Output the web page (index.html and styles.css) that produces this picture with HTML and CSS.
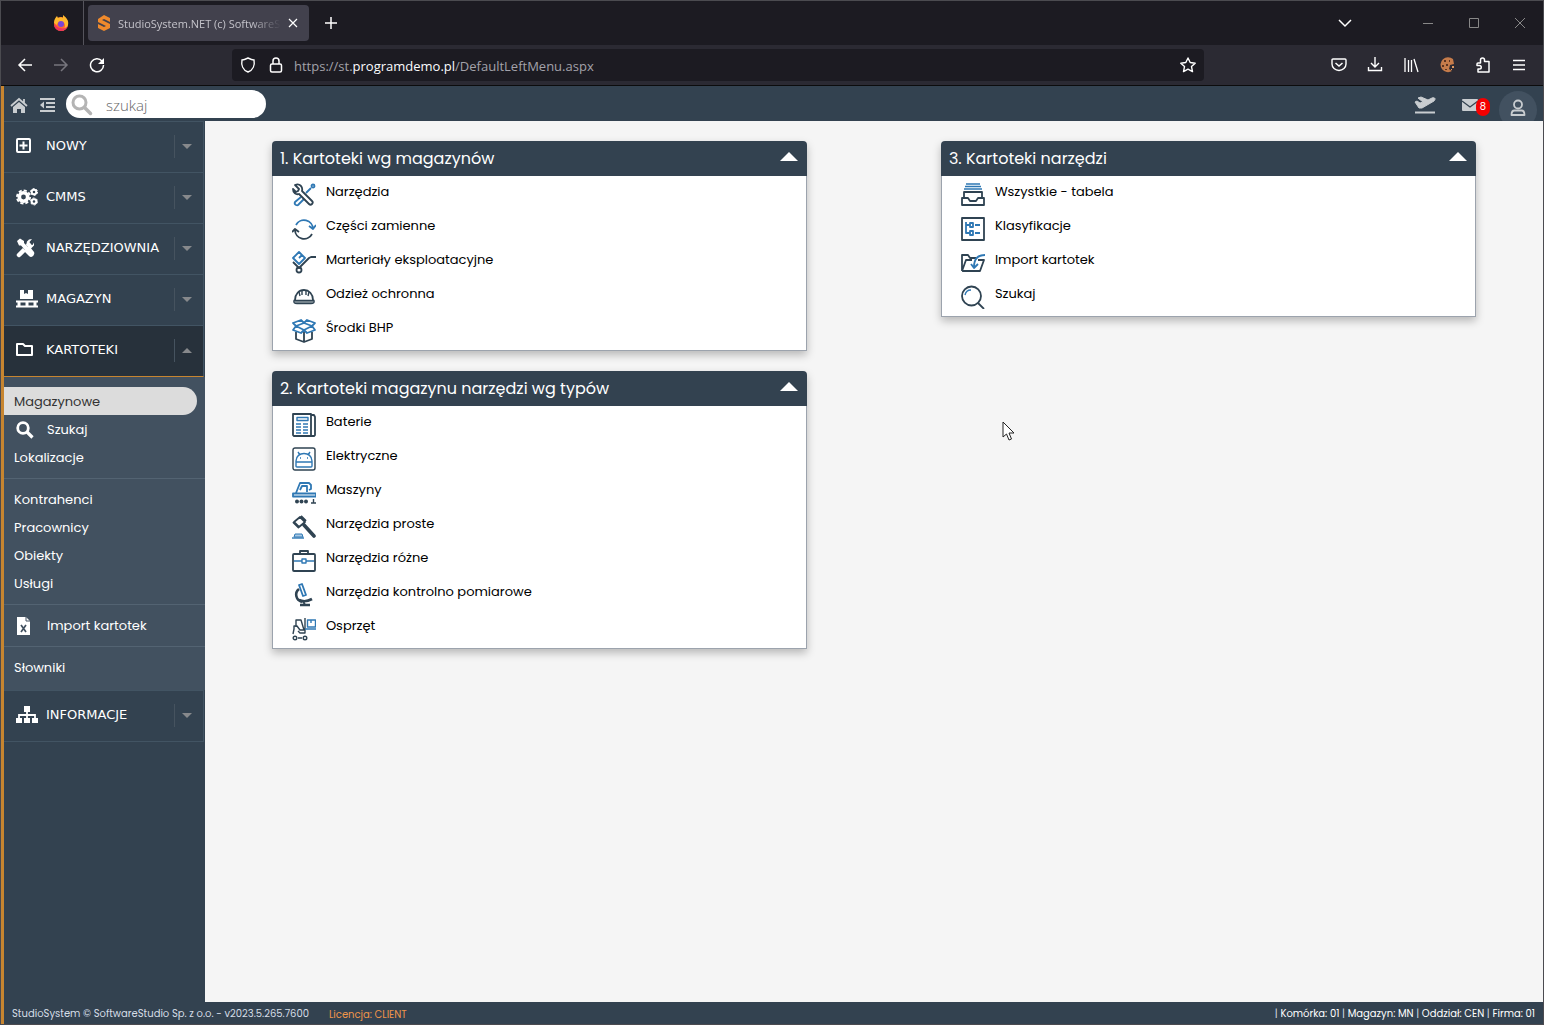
FILE: index.html
```html
<!DOCTYPE html>
<html lang="pl">
  <head>
    <meta charset="UTF-8" />
    <meta name="viewport" content="width=device-width, initial-scale=1.0" />
    <title>StudioSystem.NET (c) SoftwareStudio</title>
    <link rel="stylesheet" href="styles.css">
  </head>
  <body>
    <!-- browser -->
    <div class="tabs">
      <div class="pinned">
        <svg width="18" height="18" viewBox="0 0 18 18"><circle cx="9" cy="10" r="7" fill="#ff6a2b"/><path d="M2 9C2 5 4 3 5 2l1 2c2-1 4-1 5 0L11 1c4 3 6 6 5 10-1 3-3 5-6 6 4-3 4-7 1-9-3-1-6 0-6 3-1-1-2-1-3-2z" fill="#ffb92e"/><path d="M2 10c0 4 3 7 7 7 3 0 6-2 7-5-2 2-5 3-7 2-3 0-5-2-7-4z" fill="#f0355c"/><circle cx="9" cy="10" r="3" fill="#7a45d8"/></svg>
      </div>
      <div class="tab">
        <svg width="14" height="18" viewBox="0 0 14 18"><path d="M1 5l6-4 6 3v4l-2-1-4-2-2 1 8 4v4l-6 3-6-3v-4l6 3 2-1-8-4z" fill="#f08a2c"/></svg>
        <span class="tab_title">StudioSystem.NET (c) SoftwareS</span>
        <button class="tab_close" aria-label="Zamknij kartę"><svg width="10" height="10" viewBox="0 0 10 10"><path d="M1 1l8 8M9 1l-8 8" stroke="#fff" stroke-width="1.2"/></svg></button>
      </div>
      <button class="tab_new" aria-label="Nowa karta"><svg width="14" height="14" viewBox="0 0 14 14"><path d="M7 1v12M1 7h12" stroke="#fff" stroke-width="1.5"/></svg></button>
      <div class="window_btns">
        <button aria-label="Lista kart"><svg width="14" height="14" viewBox="0 0 14 14"><path d="M1 4l6 6 6-6" fill="none" stroke="#fff" stroke-width="1.5"/></svg></button>
        <button aria-label="Minimalizuj"><svg width="10" height="10" viewBox="0 0 10 10"><path d="M0 5.5h10" stroke="#888"/></svg></button>
        <button aria-label="Maksymalizuj"><svg width="10" height="10" viewBox="0 0 10 10"><path d="M.5.5h9v9h-9z" fill="none" stroke="#888"/></svg></button>
        <button aria-label="Zamknij"><svg width="10" height="10" viewBox="0 0 10 10"><path d="M0 0l10 10M10 0L0 10" stroke="#888"/></svg></button>
      </div>
    </div>
    <div class="toolbar">
      <div class="nav_btns">
        <button aria-label="Wstecz"><svg width="16" height="16" viewBox="0 0 16 16"><path d="M15 8H2M8 2L2 8l6 6" fill="none" stroke="#fff" stroke-width="1.5"/></svg></button>
        <button aria-label="Dalej"><svg width="16" height="16" viewBox="0 0 16 16"><path d="M1 8h13M8 2l6 6-6 6" fill="none" stroke="#77767e" stroke-width="1.5"/></svg></button>
        <button aria-label="Odśwież"><svg width="16" height="16" viewBox="0 0 16 16"><path d="M13 4a6.5 6.5 0 1 0 1.5 4" fill="none" stroke="#fff" stroke-width="1.5"/><path d="M15 1v6H9z" fill="#fff"/></svg></button>
      </div>
      <div class="url">
        <svg width="16" height="16" viewBox="0 0 16 16"><path d="M8 1c2 1 4 2 6 2 1 5-1 10-6 12C3 13 1 8 2 3c2 0 4-1 6-2z" fill="none" stroke="#fff" stroke-width="1.4"/></svg>
        <svg width="16" height="16" viewBox="0 0 16 16"><rect x="2.5" y="7" width="11" height="8" rx="1.5" fill="none" stroke="#fff" stroke-width="1.5"/><path d="M5 7V4a3 3 0 0 1 6 0v3" fill="none" stroke="#fff" stroke-width="1.5"/></svg>
        <span class="url_text">https://st.<b>programdemo.pl</b>/DefaultLeftMenu.aspx</span>
        <button class="star" aria-label="Dodaj zakładkę"><svg width="16" height="16" viewBox="0 0 16 16"><path d="M8 1l2.2 4.5 5 .7-3.7 3.4 1 5L8 12.2 3.5 14.6l1-5L.8 6.2l5-.7z" fill="none" stroke="#fff" stroke-width="1.4" stroke-linejoin="round"/></svg></button>
      </div>
      <div class="tools">
        <button aria-label="Pocket"><svg width="16" height="16" viewBox="0 0 16 16"><path d="M2 2h12q1 0 1 1v4a7 6.5 0 0 1-14 0V3q0-1 1-1z" fill="none" stroke="#fff" stroke-width="1.4"/><path d="M4.5 6L8 9l3.5-3" fill="none" stroke="#fff" stroke-width="1.5"/></svg></button>
        <button aria-label="Pobrane"><svg width="16" height="16" viewBox="0 0 16 16"><path d="M8 0v10M4 6l4 4 4-4M1.500 10v3.500h13V10" fill="none" stroke="#fff" stroke-width="1.4"/></svg></button>
        <button aria-label="Biblioteka"><svg width="16" height="16" viewBox="0 0 16 16"><path d="M2 1v14M5.5 3v12M8.5 3v12M11 2l4 13" fill="none" stroke="#fff" stroke-width="1.3"/></svg></button>
        <button aria-label="Ciasteczka"><svg width="16" height="16" viewBox="0 0 16 16"><path d="M14 2A7.5 7.5 0 1 0 13 14l-3-2 1-4 4-1z" fill="#c57b4a"/><path d="M13 9h2v2h-2zM12 12h1v1h-1z" fill="#e09a63"/><path d="M5 3h2v2H5zM3 8h2v2H3zM7 7h2v2H7zM6 12h2v1H6zM10 3h1v2h-1z" fill="#5c3421"/></svg></button>
        <button aria-label="Rozszerzenia"><svg width="16" height="16" viewBox="0 0 16 16"><path d="M5.5 4.5V3a2 2 0 0 1 4 0v1.5H14V15H3v-3h1.5a1.5 1.5 0 0 0 0-3.5H2V7q0-1 1-1h2.5z" fill="none" stroke="#fff" stroke-width="1.5" stroke-linejoin="round"/></svg></button>
        <button aria-label="Menu"><svg width="16" height="16" viewBox="0 0 16 16"><path d="M2 3.5h12M2 8h12M2 12.5h12" stroke="#fff" stroke-width="1.4"/></svg></button>
      </div>
    </div>

    <!-- application -->
    <div class="app">
      <header class="topbar">
        <a href="#" class="home" aria-label="Start"><svg width="18" height="16" viewBox="0 0 18 16"><path d="M9 5l6 5v6h-4v-4H7v4H3v-6z" fill="#c9cdd0"/><path d="M1 9l8-7 8 7M14 2v4" fill="none" stroke="#c9cdd0" stroke-width="1.8"/></svg></a>
        <button class="fold" aria-label="Zwiń menu"><svg width="15" height="14" viewBox="0 0 15 14"><path d="M0 1h15M6 5h9M6 9h9M0 13h15" stroke="#c9cdd0" stroke-width="2"/><path d="M4 3.5v7L0 7z" fill="#c9cdd0"/></svg></button>
        <label class="search">
          <svg width="22" height="22" viewBox="0 0 22 22"><circle cx="8.5" cy="8.5" r="6.5" fill="none" stroke="#b4b4b4" stroke-width="3"/><path d="M13.5 13.5l6 6" stroke="#b4b4b4" stroke-width="3.5" stroke-linecap="round"/></svg>
          <input type="text" placeholder="szukaj" aria-label="szukaj">
        </label>
        <div class="top_right">
          <a href="#" aria-label="Delegacje"><svg width="22" height="18" viewBox="0 0 22 18"><path d="M1 16.5h20" stroke="#c9cdd0" stroke-width="2"/><path d="M1 6l2-1 3 2 3-1-5-4 3-1 7 3 4-2c3-1 4 1 2 3L8 12H5z" fill="#c9cdd0" stroke="#c9cdd0" stroke-width="1"/></svg></a>
          <a href="#" class="mail" aria-label="Wiadomości"><svg width="16" height="12" viewBox="0 0 16 12"><rect width="16" height="12" rx="1" fill="#c9cdd0"/><path d="M0 2l8 6 8-6" fill="none" stroke="#33424f" stroke-width="1.2"/></svg><span class="badge">8</span></a>
          <button class="user" aria-label="Konto"><svg width="16" height="18" viewBox="0 0 16 18"><circle cx="8" cy="5.5" r="4" fill="none" stroke="#c9cdd0" stroke-width="1.8"/><path d="M4.5 11.5h7q3 0 3 4.5h-13q0-4.5 3-4.5z" fill="none" stroke="#c9cdd0" stroke-width="1.8" stroke-linejoin="round"/></svg></button>
        </div>
      </header>

      <div class="middle">
        <nav class="sidebar">
          <button class="menu_item"><svg width="22" height="22" viewBox="0 0 22 22"><rect x="1" y="4" width="13" height="13" rx="1" fill="none" stroke="#fff" stroke-width="2"/><path d="M7.5 6.5v8M3.5 10.5h8" stroke="#fff" stroke-width="2"/></svg><span>NOWY</span><i class="arrow"></i></button>
          <button class="menu_item"><svg width="22" height="22" viewBox="0 0 22 22"><circle cx="7.5" cy="11" r="4.2" fill="none" stroke="#fff" stroke-width="3.6"/><circle cx="7.5" cy="11" r="6.6" fill="none" stroke="#fff" stroke-width="1.8" stroke-dasharray="3.2 1.98"/><circle cx="18" cy="6" r="2.3" fill="none" stroke="#fff" stroke-width="2"/><circle cx="18" cy="6" r="3.5" fill="none" stroke="#fff" stroke-dasharray="2 1.66"/><circle cx="18" cy="15.5" r="2.3" fill="none" stroke="#fff" stroke-width="2"/><circle cx="18" cy="15.5" r="3.5" fill="none" stroke="#fff" stroke-dasharray="2 1.66"/></svg><span>CMMS</span><i class="arrow"></i></button>
          <button class="menu_item"><svg width="22" height="22" viewBox="0 0 22 22"><path d="M3 18L13 8" stroke="#fff" stroke-width="4.5" stroke-linecap="round"/><path d="M13 2.5l3-.5-2.5 3 .5 2.5 2.5.5L18 5.5v3l-3 3h-3l-2-3 1-4z" fill="#fff"/><path d="M4 5l8 8" stroke="#334250" stroke-width="4"/><path d="M1 4l3-2.5L8 4v2l4 4 2 0 4 5q1 2-1 4t-4 0l-4-4v-2L5 8.5H3z" fill="#fff"/></svg><span>NARZĘDZIOWNIA</span><i class="arrow"></i></button>
          <button class="menu_item"><svg width="22" height="22" viewBox="0 0 22 22"><path d="M4 2h4v4l2-1 2 1V2h5v9H4z" fill="#fff"/><path d="M0 13.5h22M0 18.5h22" stroke="#fff" stroke-width="2"/><path d="M3 13v6M11 13v6M19 13v6" stroke="#fff" stroke-width="3"/></svg><span>MAGAZYN</span><i class="arrow"></i></button>
          <button class="menu_item open"><svg width="22" height="22" viewBox="0 0 22 22"><path d="M1 5h6l2 2h7v9H1z" fill="none" stroke="#fff" stroke-width="2" stroke-linejoin="round"/></svg><span>KARTOTEKI</span><i class="arrow"></i></button>
          <div class="submenu">
            <a href="#" class="active">Magazynowe</a>
            <a href="#"><svg width="18" height="18" viewBox="0 0 18 18"><circle cx="7" cy="7" r="5.3" fill="none" stroke="#fff" stroke-width="2.8"/><path d="M11 11l5.5 5.5" stroke="#fff" stroke-width="3.2"/></svg>Szukaj</a>
            <a href="#">Lokalizacje</a>
            <hr>
            <a href="#">Kontrahenci</a>
            <a href="#">Pracownicy</a>
            <a href="#">Obiekty</a>
            <a href="#">Usługi</a>
            <hr>
            <a href="#"><svg width="18" height="18" viewBox="0 0 18 18"><path d="M1 0h9l4 4v14H1z" fill="#fff"/><path d="M10 0v4h4" fill="none" stroke="#425160"/><path d="M5 8l5 7M10 8l-5 7" stroke="#425160" stroke-width="1.7"/></svg>Import kartotek</a>
            <hr>
            <a href="#">Słowniki</a>
          </div>
          <button class="menu_item"><svg width="22" height="22" viewBox="0 0 22 22"><path d="M8 2h6v6H8zM0 14h6v5H0zM8 14h6v5H8zM16 14h6v5h-6z" fill="#fff"/><path d="M11 7v8M3 15v-4h16v4" fill="none" stroke="#fff" stroke-width="1.8"/></svg><span>INFORMACJE</span><i class="arrow"></i></button>
        </nav>

        <main class="content">
          <div class="column">
            <section class="panel">
              <button class="panel_head">1. Kartoteki wg magazynów<i class="up"></i></button>
              <ul>
                <li><a href="#"><svg class="ico" viewBox="0 0 24 24"><path class="b" d="M14 10l5-5M9 14l-6 5q-1 2 1 3t3-1l5-5"/><circle class="b" cx="21" cy="3" r="1.5"/><path class="d" d="M3 2l4 4-1 2-2 1-3-3c0 4 3 6 6 5l10 10c2 2 5-1 3-3L10 8c1-4-2-8-7-6z"/></svg>Narzędzia</a></li>
                <li><a href="#"><svg class="ico" viewBox="0 0 24 24"><path class="b" d="M4 8a9 9 0 0 1 17 4M17 9l4 3 3-4"/><path class="d" d="M20 17a9 9 0 0 1-17-4M0 15l3-3 4 3"/></svg>Części zamienne</a></li>
                <li><a href="#"><svg class="ico" viewBox="0 0 24 24"><path class="b" d="M7 1l6 6-6 6-6-6zM10 4L7 7"/><path class="d" d="M1 11l6 6L17 7l2-1h5"/><circle class="d" cx="7" cy="19" r="2.5"/></svg>Marteriały eksploatacyjne</a></li>
                <li><a href="#"><svg class="ico" viewBox="0 0 24 24"><path class="d" d="M3 15c0-6 4-10 9-10s9 4 9 10"/><path class="d thin" d="M10 5v5M14 5v5M7 7l1 4M17 7l-1 4"/><path d="M2 15.5h20q1 3-3 3H5q-4 0-3-3z" fill="#8d98a1" stroke="#2f4352" stroke-width="1.3"/></svg>Odzież ochronna</a></li>
                <li><a href="#"><svg class="ico" viewBox="0 0 24 24"><path class="d" d="M4 13v7l8 3 8-3v-7M12 13v10"/><path class="b" d="M4 7l8-3 8 3-8 4zM4 7L1 4l8-3 3 3 3-3 8 3-3 3 3 4-8 3-3-3-3 3-8-3z"/></svg>Środki BHP</a></li>
              </ul>
            </section>
            <section class="panel">
              <button class="panel_head">2. Kartoteki magazynu narzędzi wg typów<i class="up"></i></button>
              <ul>
                <li><a href="#"><svg class="ico" viewBox="0 0 24 24"><path class="d" d="M1 1h18v22H2l-1-1zM19 2h3l1 2v18l-1 1h-4"/><path class="b thin" d="M5 4.5h11v3H5zM4 11h5M11 11h5M4 14h5M11 14h5M4 17h5M11 17h5M4 20h5M11 20h5"/></svg>Baterie</a></li>
                <li><a href="#"><svg class="ico" viewBox="0 0 24 24"><rect class="d thin" x="1" y="1" width="22" height="22" rx="2"/><path class="b thin" d="M4 19v-5c0-10 16-10 16 0v5q0 1-1 1H5q-1 0-1-1zM4 15h16M8 8L6 5M16 8l2-3M8 11h1M15 11h1"/></svg>Elektryczne</a></li>
                <li><a href="#"><svg class="ico" viewBox="0 0 24 24"><path class="b" d="M4 12l4-10h9l2 2v4l-2 1M8 9l2-4h5v6M1 12.500h23v3H1z"/><circle class="f" cx="5" cy="20.5" r="2"/><circle class="f" cx="9.5" cy="20.5" r="2"/><circle class="f" cx="14" cy="20.5" r="2"/><path class="d thin" d="M21.5 18v4M19 22h5"/></svg>Maszyny</a></li>
                <li><a href="#"><svg class="ico" viewBox="0 0 24 24"><path class="d" d="M8 2l5 5-6 5-5-5zM9 1l5 5M1 7l6 6"/><path d="M12 10l10 11" stroke="#2f4352" stroke-width="3.6" stroke-linecap="round"/><path d="M2 22l1-3h7l1 3z" fill="#a9c9e4" stroke="#2f78b4"/><path class="b thin" d="M0 23h12"/></svg>Narzędzia proste</a></li>
                <li><a href="#"><svg class="ico" viewBox="0 0 24 24"><rect class="d" x="1" y="5" width="22" height="17" rx="1"/><path class="d" d="M8 5V2h8v3"/><path class="b thin" d="M2 12h8M14 12h8M10 10h4v4h-4z"/></svg>Narzędzia różne</a></li>
                <li><a href="#"><svg class="ico" viewBox="0 0 24 24"><path class="b" d="M7 2l3-1 4 11-3 1z"/><path d="M7 6C2 10 4 17 10 19M7 17q6 3 13-1M8 22h10" fill="none" stroke="#2f4352" stroke-width="2.6"/><path class="d" d="M11 18l2 4"/></svg>Narzędzia kontrolno pomiarowe</a></li>
                <li><a href="#"><svg class="ico" viewBox="0 0 24 24"><path class="d thin" d="M4 10V3h5l3 10H8L5 9H2v3l-1 5M13 1v15H8l-2-2M6 21h4"/><circle class="d thin" cx="3" cy="21" r="1.800"/><circle class="d thin" cx="13" cy="21" r="1.800"/><path class="b thin" d="M15.500 3h8v7h-8zM19 3v3M13 12h11"/></svg>Osprzęt</a></li>
              </ul>
            </section>
          </div>
          <div class="column">
            <section class="panel">
              <button class="panel_head">3. Kartoteki narzędzi<i class="up"></i></button>
              <ul>
                <li><a href="#"><svg class="ico" viewBox="0 0 24 24"><path class="b thin" d="M5 1h14M4 3.5h16M3 6h18"/><path class="d" d="M3 15V9h18v6M1 15h6l2 3h6l2-3h6v7H1z"/></svg>Wszystkie - tabela</a></li>
                <li><a href="#"><svg class="ico" viewBox="0 0 24 24"><path class="d" d="M1 1h22v22H1z"/><path class="b" d="M5 5v11h4M5 8h4M9 6h3v4H9zM9 14h3v4H9zM14 8h5M14 16h5"/></svg>Klasyfikacje</a></li>
                <li><a href="#"><svg class="ico" viewBox="0 0 24 24"><path class="d" d="M1 20V4h6l2 3h6M1 20L5 9h6M17 9h6l-4 11H1"/><path class="b" d="M24 4c-8 0-11 4-11 12M10 13l3 4 4-4"/></svg>Import kartotek</a></li>
                <li><a href="#"><svg class="ico" viewBox="0 0 24 24"><circle class="d" cx="10.5" cy="11" r="9.5"/><path class="d" d="M17 18l6 6"/><path class="b thin" d="M4 10q1-5 6-5"/></svg>Szukaj</a></li>
              </ul>
            </section>
          </div>
          <svg class="pointer" width="13" height="20" viewBox="0 0 13 20"><path d="M1 1v15l3.5-3 2.5 6 2.5-1-2.5-6H12z" fill="#fff" stroke="#222"/></svg>
        </main>
      </div>

      <footer class="footer">
        <span>StudioSystem © SoftwareStudio Sp. z o.o. - v2023.5.265.7600</span>
        <span class="licence">Licencja: CLIENT</span>
        <span class="place">| <b>Komórka: 01</b> | <b>Magazyn: MN</b> | <b>Oddział: CEN</b> | <b>Firma: 01</b></span>
      </footer>
    </div>
  </body>
</html>
```
FILE: styles.css
```css
* {
  box-sizing: border-box;
}

body {
  margin: 0;
  min-height: 100vh;
  display: flex;
  flex-direction: column;
  border: 1px solid #4b4b50;
  background: #f5f5f5;
  font-family: Poppins, Inter, sans-serif;
  font-size: 13px;
}

button {
  padding: 0;
  border: none;
  background: none;
  color: inherit;
  font: inherit;
  cursor: pointer;
}

a {
  color: inherit;
  text-decoration: none;
}

svg {
  display: block;
  flex: none;
}

/* browser */
.tabs,
.toolbar {
  display: flex;
  align-items: center;
  font-family: "Open Sans", sans-serif;
}

.tabs {
  height: 44px;
  background: #1c1b22;
}

.pinned {
  display: flex;
  align-items: center;
  justify-content: flex-end;
  width: 83px;
  height: 44px;
  padding-right: 13px;
  border-right: 1px solid #55545c;
}

.tab {
  display: flex;
  align-items: center;
  gap: 7px;
  width: 221px;
  height: 36px;
  margin-left: 4px;
  padding: 0 11px 0 9px;
  border-radius: 4px;
  background: #42414d;
  color: #c4c3ca;
  font-size: 11px;
}

.tab_title {
  flex: 1;
  white-space: nowrap;
  mask-image: linear-gradient(to left, transparent, #000 30px);
}

.tab_new {
  margin-left: 15px;
}

.window_btns {
  display: flex;
  align-items: center;
  gap: 36px;
  margin-left: auto;
  padding-right: 18px;
}

.window_btns button:first-child {
  margin-right: 35px;
}

.toolbar {
  height: 41px;
  border-bottom: 1px solid #0c0c0d;
  background: #2b2a33;
}

.nav_btns {
  display: flex;
  gap: 20px;
  width: 231px;
  padding-left: 16px;
}

.url {
  flex: 1;
  display: flex;
  align-items: center;
  gap: 12px;
  height: 32px;
  padding: 0 8px;
  border-radius: 4px;
  background: #1c1b22;
  color: #a3a2aa;
}

.url_text {
  margin-left: -2px;
  padding-top: 2px;
  font-size: 13px;
}

.url b {
  color: #fbfbfe;
  font-weight: 400;
}

.star {
  margin-left: auto;
}

.tools {
  display: flex;
  gap: 20px;
  margin-left: 127px;
  padding-right: 16px;
}

/* application */
.app {
  flex: 1;
  display: flex;
  flex-direction: column;
  border-left: 3px solid #c78530;
}

.topbar {
  display: flex;
  align-items: center;
  height: 35px;
  padding-left: 6px;
  background: #334250;
}

.home,
.fold {
  padding-top: 2px;
}

.fold {
  margin: 0 11px 0 12px;
}

.search {
  display: flex;
  align-items: center;
  gap: 13px;
  width: 200px;
  height: 28px;
  padding-left: 5px;
  border-radius: 14px;
  background: #fff;
}

.search svg {
  margin-top: 2px;
}

.search input {
  flex: 1;
  min-width: 0;
  padding: 2px 0 0;
  border: none;
  outline: none;
  background: none;
  font: 300 15px "Open Sans", sans-serif;
}

.search input::placeholder {
  color: #666;
}

.top_right {
  display: flex;
  align-items: center;
  align-self: stretch;
  margin-left: auto;
  padding: 2px 6px 0 0;
  overflow: hidden;
}

.mail {
  position: relative;
  margin: 0 21px 0 26px;
}

.badge {
  position: absolute;
  left: 14px;
  top: -1px;
  width: 14px;
  height: 18px;
  border-radius: 7px;
  background: #f50000;
  color: #fff;
  font-size: 10px;
  line-height: 18px;
  text-align: center;
}

.user {
  display: flex;
  align-items: center;
  justify-content: center;
  width: 38px;
  height: 38px;
  margin-top: 10px;
  padding-bottom: 4px;
  border-radius: 50%;
  background: #425160;
}

.middle {
  flex: 1;
  display: flex;
}

.sidebar {
  width: 201px;
  flex: none;
  background: #334250;
  color: #fff;
}

.menu_item {
  display: flex;
  align-items: center;
  gap: 8px;
  width: 200px;
  height: 51px;
  padding-left: 12px;
  padding-bottom: 2px;
  border: 1px solid #425463;
  border-width: 1px 1px 0 0;
  font-family: "DejaVu Sans", sans-serif;
}

.menu_item span {
  padding-bottom: 2px;
}

.menu_item:last-child {
  height: 52px;
  border-bottom-width: 1px;
}

.menu_item.open {
  height: 52px;
  border-bottom: 1px solid #c78530;
  background: #27313b;
}

/* arrow with the thin line on its left */
.arrow {
  display: flex;
  align-items: center;
  width: 29px;
  height: 23px;
  margin-left: auto;
  padding-left: 7px;
  border-left: 1px solid #46535f;
}

.arrow::before {
  content: "";
  border: 5px solid transparent;
  border-top-color: #87898c;
  border-bottom: none;
}

.open .arrow::before {
  border-top: none;
  border-bottom: 5px solid #87898c;
}

.submenu {
  padding: 10px 0 9px;
  background: #425160;
}

.submenu a {
  display: flex;
  align-items: center;
  gap: 13px;
  height: 28px;
  padding: 2px 0 0 10px;
}

.submenu a svg {
  margin-left: 2px;
}

.submenu a.active {
  margin-right: 8px;
  border-radius: 0 14px 14px 0;
  background: #dcdcdc;
  color: #333;
}

.submenu hr {
  margin: 7px 0 6px;
  border: none;
  border-top: 1px solid #536372;
}

.content {
  position: relative;
  flex: 1;
  display: grid;
  grid-template-columns: 1fr 1fr;
}

.column {
  display: flex;
  flex-direction: column;
  gap: 20px;
  padding: 20px 10%;
}

.panel {
  border-radius: 4px 4px 0 0;
  box-shadow: 0 4px 9px rgba(0, 0, 0, 0.25);
}

.panel_head {
  display: flex;
  align-items: center;
  justify-content: space-between;
  width: 100%;
  height: 35px;
  padding: 0 9px 0 8px;
  border-radius: 4px 4px 0 0;
  background: #334250;
  color: #fff;
  font-size: 16px;
}

.up {
  margin-bottom: 4px;
  border: 9px solid transparent;
  border-top: none;
  border-bottom-color: #fff;
}

.panel ul {
  margin: 0;
  padding: 0 0 4px;
  border: 1px solid #9ca3ad;
  border-top: none;
  background: #fff;
  list-style: none;
}

.panel li a {
  display: flex;
  gap: 10px;
  height: 34px;
  padding-left: 19px;
  color: #000;
  line-height: 32px;
}

.ico {
  width: 24px;
  height: 24px;
  margin-top: 7px;
}

.ico .d,
.ico .b {
  fill: none;
  stroke: #2f4352;
  stroke-width: 1.8;
  stroke-linejoin: round;
}

.ico .b {
  stroke: #2f78b4;
}

.ico .thin {
  stroke-width: 1.4;
}

.ico .f {
  fill: #2f4352;
}

.pointer {
  position: absolute;
  left: 797px;
  top: 300px;
}

.footer {
  display: flex;
  align-items: center;
  height: 22px;
  padding: 1px 8px 0;
  background: #334250;
  color: #d5dde6;
  font-size: 10px;
}

.licence {
  margin-left: 20px;
  padding-top: 2px;
  color: #f0954a;
}

.place {
  margin-left: auto;
}

.place b {
  color: #fff;
  font-weight: 400;
}
```
